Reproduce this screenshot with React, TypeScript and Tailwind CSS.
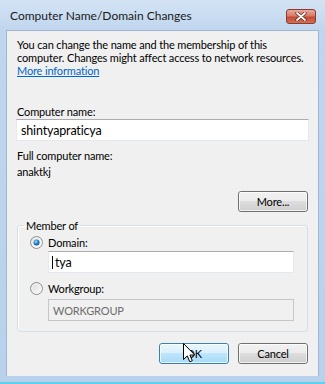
import React from 'react';

const font = { fontFamily: 'Lato, "Liberation Sans", sans-serif' };

function Radio({ checked }: { checked?: boolean }) {
  return (
    <svg width="13" height="13" viewBox="0 0 13 13" className="shrink-0">
      <defs>
        <linearGradient id={checked ? 'rg1' : 'rg0'} x1="0" y1="0" x2="1" y2="1">
          <stop offset="0" stopColor="#d8d8d8" />
          <stop offset="1" stopColor="#ffffff" />
        </linearGradient>
        <radialGradient id="dot" cx="0.4" cy="0.35" r="0.7">
          <stop offset="0" stopColor="#9fe0ff" />
          <stop offset="0.5" stopColor="#2a8ad4" />
          <stop offset="1" stopColor="#0b4a86" />
        </radialGradient>
      </defs>
      <circle cx="6.5" cy="6.5" r="6" fill={`url(#${checked ? 'rg1' : 'rg0'})`} stroke="#8e8f8f" />
      <circle cx="6.5" cy="6.5" r="4.5" fill="none" stroke="#f4f4f4" strokeWidth="1" />
      {checked && <circle cx="6.5" cy="6.5" r="3" fill="url(#dot)" />}
    </svg>
  );
}

function Button({ children, hover }: { children: React.ReactNode; hover?: boolean }) {
  return (
    <div
      className={`relative w-[70px] h-[21px] rounded-[3px] border flex items-center justify-center text-black ${
        hover
          ? 'border-[#3c7fb1] bg-[linear-gradient(#eaf6fd_0%,#d9f0fc_50%,#bee6fd_50%,#a7d9f5_100%)]'
          : 'border-[#707070] bg-[linear-gradient(#f2f2f2_0%,#ebebeb_50%,#dddddd_50%,#cfcfcf_100%)]'
      }`}
    >
      <div className="absolute inset-0 rounded-[2px] border border-white/70" />
      <span className="relative">{children}</span>
    </div>
  );
}

export default function App() {
  return (
    <div
      className="w-[325px] h-[384px] flex flex-col bg-[linear-gradient(#d3e3f4,#c0d6ee_30px,#b9d1ea)] overflow-hidden"
      style={font}
    >
      {/* Title bar */}
      <div className="h-[30px] shrink-0 flex items-start justify-between pl-[10px] pr-[9px]">
        <span className="mt-[8px] text-[12px] leading-[16px] text-[#1a1a1a]">Computer Name/Domain Changes</span>
        <div className="mt-[9px] w-[30px] h-[15px] rounded-[3px] border border-[#8d3b2c] bg-[linear-gradient(#e9a99c_0%,#d77a67_45%,#c24a33_55%,#d0705a_100%)] flex items-center justify-center">
          <svg width="12" height="9" viewBox="0 0 12 9">
            <path d="M2 1 L10 8 M10 1 L2 8" stroke="#5a1f14" strokeWidth="3.2" strokeLinecap="round" />
            <path d="M2 1 L10 8 M10 1 L2 8" stroke="#ffffff" strokeWidth="1.8" strokeLinecap="round" />
          </svg>
        </div>
      </div>

      {/* Client area */}
      <div className="mx-[6px] flex-1 bg-[#f0f0f0] border-x border-t border-[#9fb6d1] border-b-white flex flex-col text-[11px] leading-[13px] tracking-[-0.15px] text-black">
        <div className="pt-[7px] pl-[10px] whitespace-nowrap">
          <div>You can change the name and the membership of this</div>
          <div>computer. Changes might affect access to network resources.</div>
          <div className="text-[#0066cc] underline">More information</div>
        </div>

        <div className="mt-[28px] pl-[10px]">Computer name:</div>
        <div className="mt-[1px] mx-[9px] h-[22px] bg-white border border-[#e3e9ef] border-t-[#abadb3] flex items-center px-[4px] text-[12.5px]">
          shintyapraticya
        </div>

        <div className="mt-[8px] pl-[10px]">Full computer name:</div>
        <div className="mt-[3px] pl-[10px]">anaktkj</div>

        <div className="mt-[13px] flex justify-end pr-[10px]">
          <Button>More...</Button>
        </div>

        <fieldset className="mt-[7px] mx-[10px] border border-[#d5dfe5] rounded-[3px] pl-[12px] pr-[13px] pb-[10px] pt-[4px] shadow-[inset_1px_1px_0_#ffffff]">
          <legend className="-ml-[6px] px-[2px]">Member of</legend>
          <div className="flex items-center gap-[5px] h-[13px]">
            <Radio checked />
            <span>Domain:</span>
          </div>
          <div className="mt-[2px] ml-[18px] h-[22px] bg-white border border-[#e3e9ef] border-t-[#abadb3] flex items-center px-[3px] text-[12.5px]">
            <span className="w-[1px] h-[13px] bg-black mr-[2px]" />
            tya
          </div>
          <div className="mt-[9px] flex items-center gap-[5px] h-[13px]">
            <Radio />
            <span>Workgroup:</span>
          </div>
          <div className="mt-[4px] ml-[18px] h-[22px] bg-[#f0f0f0] border border-[#c5c8cb] flex items-center px-[4px] text-[#6d6d6d]">
            WORKGROUP
          </div>
        </fieldset>

        <div className="mt-[11px] flex justify-end gap-[9px] pr-[10px]">
          <div className="relative">
            <Button hover>OK</Button>
            <svg width="13" height="20" viewBox="0 0 13 20" className="absolute left-[24px] top-0">
              <path d="M0.5 0.5 L0.5 16.5 L4.3 12.9 L6.8 18.8 L9.3 17.7 L6.9 12 L11.8 12 Z" fill="#ffffff" stroke="#000000" strokeWidth="1" strokeLinejoin="round" />
            </svg>
          </div>
          <Button>Cancel</Button>
        </div>
      </div>

      <div className="h-[6px] shrink-0" />
      <div className="h-[2px] shrink-0 bg-[#5cd2f0]" />
    </div>
  );
}
